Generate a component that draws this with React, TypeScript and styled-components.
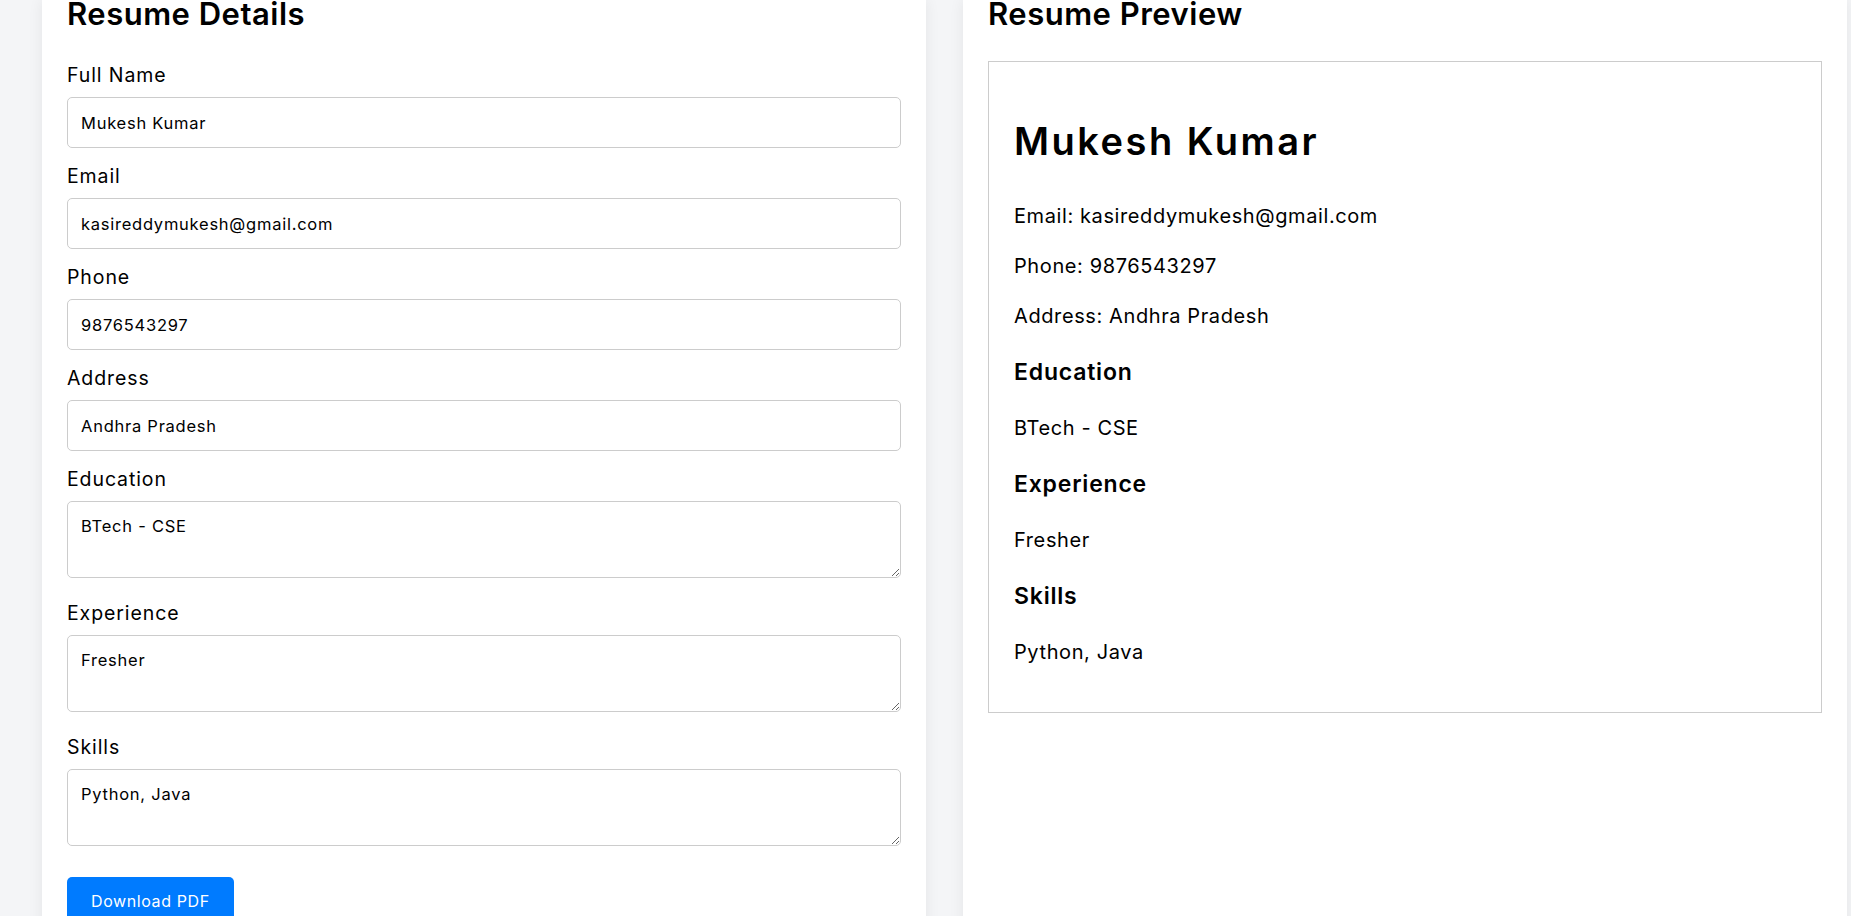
import React from "react";
import styled, { createGlobalStyle } from "styled-components";

const GlobalStyle = createGlobalStyle`
  html, body {
    margin: 0;
    padding: 0;
    background: #f4f5f7;
    font-family: "Inter", "Liberation Sans", sans-serif;
    font-variant-numeric: proportional-nums;
    color: #000;
    overflow: hidden;
  }
  * { box-sizing: border-box; }
`;

const Page = styled.div`
  display: flex;
  align-items: flex-start;
  gap: 37px;
  padding: 0 4px 0 42px;
  height: 916px;
  overflow: hidden;
`;

const Card = styled.section`
  flex: 1 1 0;
  min-width: 0;
  background: #fff;
  padding: 0 25px 40px;
  min-height: 960px;
  box-shadow: 0 0 14px rgba(0, 0, 0, 0.07);
`;

const Heading = styled.h2<{ $gapBelow: number }>`
  margin: 0 0 ${(p) => p.$gapBelow}px;
  font-size: 31px;
  line-height: 27px;
  font-weight: 600;
  letter-spacing: 0.5px;
`;

const Form = styled.form`
  display: flex;
  flex-direction: column;
`;

const Label = styled.label`
  display: block;
  font-size: 19.5px;
  line-height: 27px;
  margin-bottom: 8px;
  letter-spacing: 0.9px;
`;

const TextInput = styled.input`
  display: block;
  width: 100%;
  height: 51px;
  margin: 0 0 15px;
  padding: 0 13px;
  border: 1px solid #cccccc;
  border-radius: 5px;
  font-family: inherit;
  font-variant-numeric: proportional-nums;
  font-size: 16.5px;
  letter-spacing: 0.75px;
  color: #000;
  background: #fff;
  outline: none;
`;

const TextArea = styled.textarea`
  display: block;
  width: 100%;
  height: 77px;
  margin: 0 0 22px;
  padding: 14px 13px;
  border: 1px solid #cccccc;
  border-radius: 5px;
  font-family: inherit;
  font-size: 16.5px;
  letter-spacing: 0.75px;
  color: #000;
  background: #fff;
  resize: vertical;
  outline: none;
`;

const Button = styled.button`
  align-self: flex-start;
  margin-top: 9px;
  height: 48px;
  padding: 0 24px;
  border: none;
  border-radius: 5px;
  background: #007bff;
  color: #fff;
  font-family: inherit;
  font-size: 16px;
  letter-spacing: 0.6px;
  cursor: pointer;
`;

const PreviewBox = styled.div`
  display: flex;
  flex-direction: column;
  border: 1px solid #cccccc;
  padding: 27px 25px 24px;
`;

const Name = styled.h1`
  margin: 32px 0 41px;
  font-size: 38px;
  line-height: 40px;
  font-weight: 600;
  letter-spacing: 2.5px;
`;

const Para = styled.p`
  margin: 0 0 22px;
  font-size: 20px;
  line-height: 28px;
  letter-spacing: 0.6px;
`;

const SubHeading = styled.h3`
  margin: 5px 0 27px;
  font-size: 23px;
  line-height: 30px;
  font-weight: 600;
  letter-spacing: 0.8px;
`;

type FieldDef = { key: string; label: string; value: string; multiline?: boolean };

const fields: FieldDef[] = [
  { key: "name", label: "Full Name", value: "Mukesh Kumar" },
  { key: "email", label: "Email", value: "kasireddymukesh@gmail.com" },
  { key: "phone", label: "Phone", value: "9876543297" },
  { key: "address", label: "Address", value: "Andhra Pradesh" },
  { key: "education", label: "Education", value: "BTech - CSE", multiline: true },
  { key: "experience", label: "Experience", value: "Fresher", multiline: true },
  { key: "skills", label: "Skills", value: "Python, Java", multiline: true },
];

export default function App() {
  const [data, setData] = React.useState<Record<string, string>>(() =>
    Object.fromEntries(fields.map((f) => [f.key, f.value]))
  );
  const update = (k: string) => (e: React.ChangeEvent<HTMLInputElement | HTMLTextAreaElement>) =>
    setData((d) => ({ ...d, [k]: e.target.value }));

  return (
    <>
      <GlobalStyle />
      <Page>
        <Card>
          <Heading $gapBelow={35}>Resume Details</Heading>
          <Form onSubmit={(e) => e.preventDefault()}>
            {fields.map((f) => (
              <React.Fragment key={f.key}>
                <Label htmlFor={f.key}>{f.label}</Label>
                {f.multiline ? (
                  <TextArea id={f.key} value={data[f.key]} onChange={update(f.key)} />
                ) : (
                  <TextInput id={f.key} value={data[f.key]} onChange={update(f.key)} />
                )}
              </React.Fragment>
            ))}
            <Button type="button">Download PDF</Button>
          </Form>
        </Card>
        <Card>
          <Heading $gapBelow={34}>Resume Preview</Heading>
          <PreviewBox>
            <Name>{data.name}</Name>
            <Para>Email: {data.email}</Para>
            <Para>Phone: {data.phone}</Para>
            <Para>Address: {data.address}</Para>
            <SubHeading>Education</SubHeading>
            <Para>{data.education}</Para>
            <SubHeading>Experience</SubHeading>
            <Para>{data.experience}</Para>
            <SubHeading>Skills</SubHeading>
            <Para>{data.skills}</Para>
          </PreviewBox>
        </Card>
      </Page>
    </>
  );
}
